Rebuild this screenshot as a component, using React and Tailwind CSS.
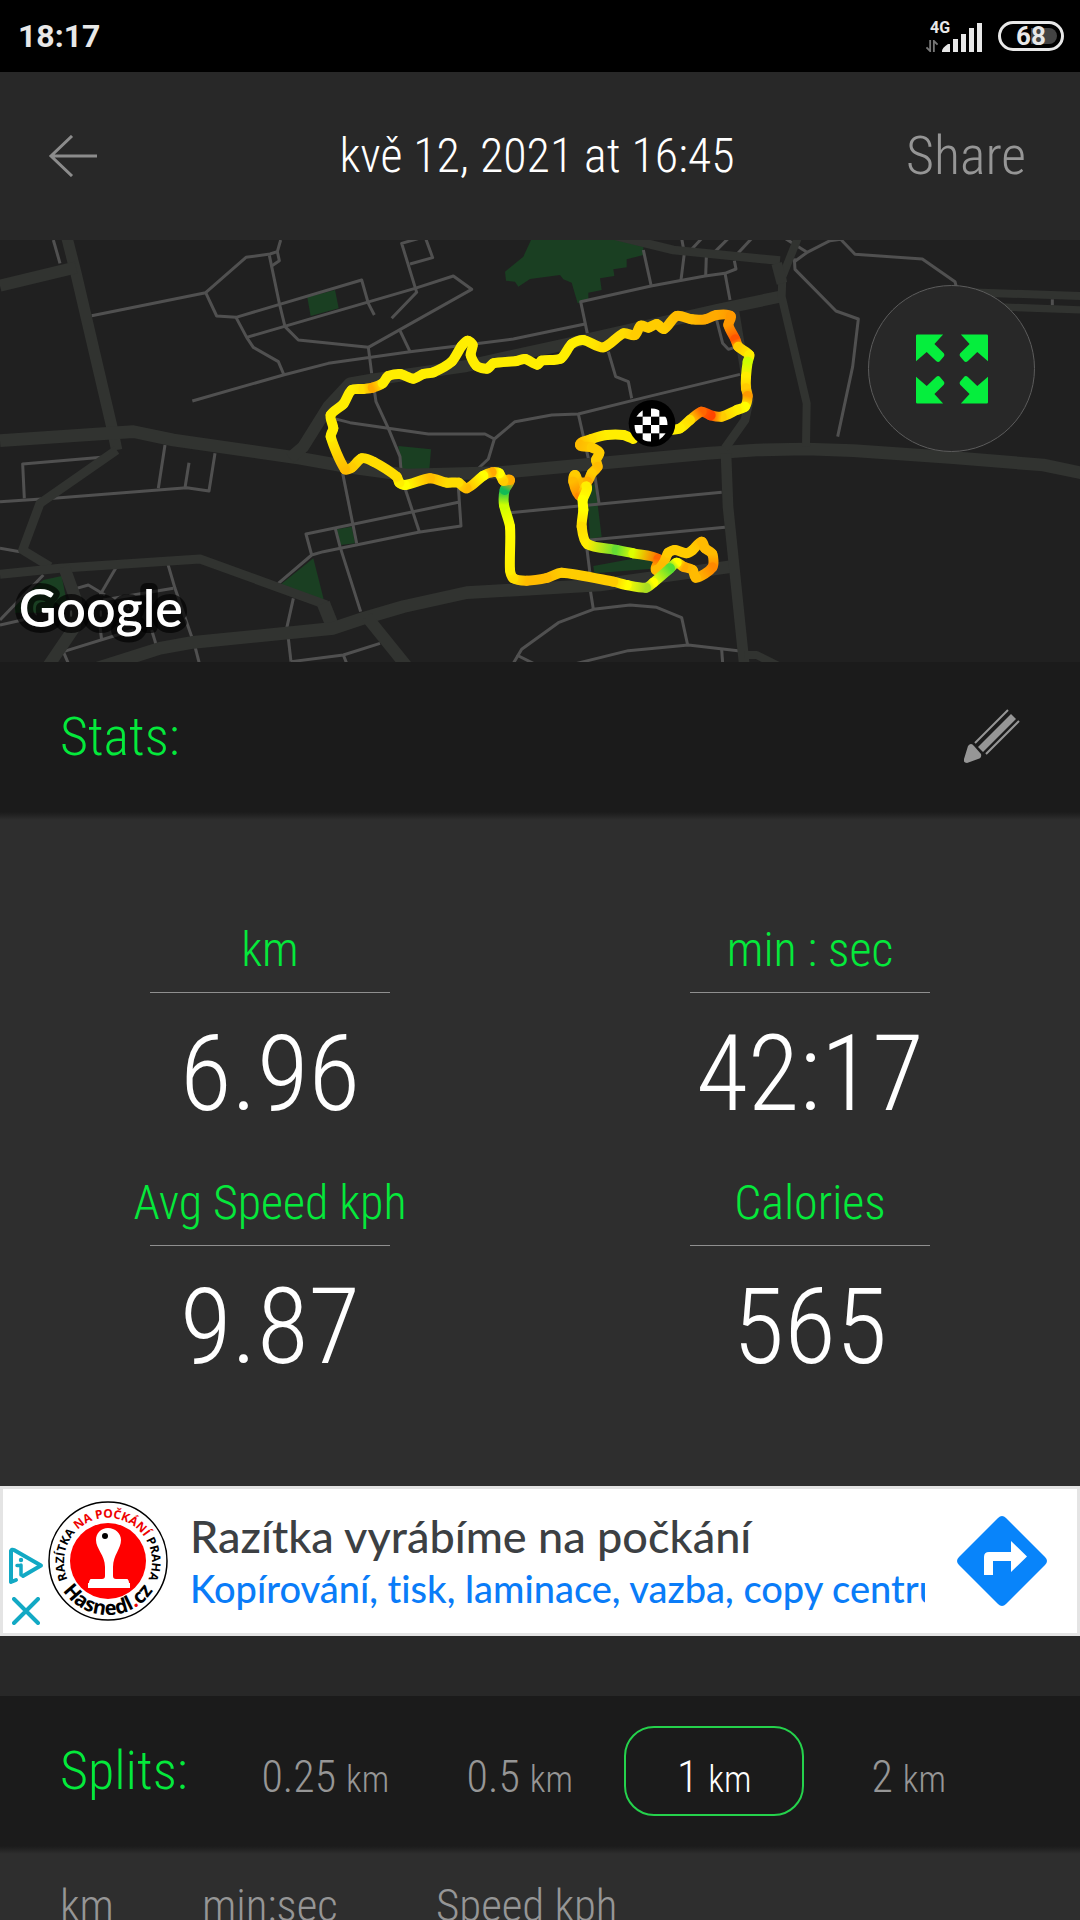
import React from "react";

const DISPLAY = "font-['Roboto_Condensed',Roboto,sans-serif] font-light";

const MAJOR_ROADS = [
  [34, "M200,-10 L228,100 L340,580 L350,630"],
  [27, "M350,630 L120,790 L68,930 L150,980"],
  [36, "M0,137 L228,82"],
  [38, "M0,602 L400,575 L520,600 L900,655 L1060,683 L1220,705 L1500,698 L2120,640 L2270,630 L2418,627 L2560,632 L2860,653 L3130,675 L3250,700"],
  [36, "M870,655 L910,620 L985,500 L1050,430 L1110,420 L1400,378 L1700,312 L2150,210 L2350,168"],
  [27, "M0,1003 L180,985 L600,957 L980,1095"],
  [40, "M970,1090 L1000,1165"],
  [38, "M290,1285 L480,1225 L580,1207 L1000,1165 L1090,1135 L1210,1100 L1400,1058 L1800,1035 L2190,980"],
  [36, "M192,980 L228,1080 L225,1160 L140,1285"],
  [36, "M1100,1130 L1225,1285"],
  [26, "M1840,-14 L2020,30 L2340,62"],
  [24, "M2395,-10 L2347,110 L2345,170 L2420,490 L2418,620"],
  [32, "M2330,70 L2346,130"],
  [32, "M2178,640 L2184,800 L2234,1285"],
  [24, "M2234,1245 L2270,1245 L2350,1285"],
  [26, "M2205,215 L2248,480 L2235,540 L2175,625"],
  [24, "M2880,156 L3250,168"],
  [22, "M2980,200 L3250,210"],
];

const MINOR_ROADS = [
  "M160,0 L180,70",
  "M275,227 L617,158 L738,52 L810,42 L832,35 L842,0",
  "M832,35 L838,62 L815,78",
  "M617,158 L650,228 L708,232 L1085,120 L1105,190 L1123,225",
  "M708,232 L740,292 L760,322 L835,365 L852,405",
  "M808,46 L838,190 L855,260 L895,300 L1105,322",
  "M740,292 L1245,145 L1360,108 L1415,148 L1105,322 L1115,400",
  "M577,483 L850,405 L985,370 L1230,335 L1440,310 L1540,297 L1755,252",
  "M1200,272 L1230,335",
  "M1175,235 L1250,157 L1205,10 L1275,-10 L1298,53 L1230,72",
  "M1762,280 L1742,185 L1953,138 L2115,108 L2175,100 L2208,87 L2203,62",
  "M1930,30 L1953,135",
  "M2045,-5 L2053,40 L2043,120",
  "M2119,50 L2117,108",
  "M2075,28 L2110,-10",
  "M2140,40 L2190,-10",
  "M2208,46 L2260,-10",
  "M2175,100 L2190,180",
  "M2150,240 L2168,310 L2185,328 L2212,320",
  "M2355,-5 L2420,36",
  "M2383,65 L2420,38 L2490,2 L2522,-2 L2565,43 L2767,57 L2865,125 L2870,145",
  "M2383,55 L2385,88 L2508,213 L2575,237 L2558,380 L2513,590",
  "M3157,178 L3157,196",
  "M1825,335 L1847,410 L1885,425 L1895,475",
  "M1430,690 L1465,657 L1483,597 L1545,545 L1655,525 L1735,522 L1935,472 L2220,403",
  "M1483,597 L1455,582 L1285,582 L1050,548 L1000,535",
  "M1120,430 L1128,485 L1165,565 L1200,650 L1203,690",
  "M1735,522 L1765,655",
  "M1028,700 L1070,910",
  "M1005,862 L1020,920 L1082,1115",
  "M935,945 L918,882 L1375,787",
  "M835,1030 L935,945 L970,935 L1255,877 L1383,858 L1375,740",
  "M1215,745 L1258,875",
  "M1530,818 L1800,792 L2165,757",
  "M1785,710 L1797,790",
  "M1770,900 L2175,862",
  "M1760,920 L1770,1000",
  "M1770,1045 L1780,1108",
  "M1540,1270 L1565,1228 L1675,1148 L1780,1108 L1890,1095 L1970,1102 L2045,1133 L2063,1215",
  "M1730,1270 L1885,1232 L2065,1215 L2220,1233",
  "M2165,1228 L2168,1270",
  "M1550,1245 L1610,1275",
  "M873,1265 L1030,1245 L1140,1210",
  "M1030,1245 L1040,1270",
  "M73,775 L68,672 L305,652",
  "M0,785 L180,773 L560,743 L627,753 L645,640",
  "M495,615 L475,745",
  "M567,668 L555,743",
  "M0,925 L60,935",
  "M347,985 L300,1065",
  "M230,1045 L265,1035 L315,1065",
  "M310,1080 L520,1045",
  "M503,970 L525,1045 L575,1190",
  "M0,1140 L130,1005",
  "M0,1155 L90,1135",
  "M300,1160 L305,1200",
  "M205,1270 L190,1235 L400,1170",
  "M455,1170 L470,1220",
  "M585,1220 L598,1270",
  "M880,1075 L860,1165",
  "M865,1195 L873,1265",
];

const PARKS = [
  "922,172 1005,150 1016,205 932,228",
  "840,1035 940,955 972,1082",
  "1010,868 1055,860 1065,910 1022,915",
  "45,1090 130,1020 185,1008 200,1085 120,1118 45,1118",
  "1593,0 1570,50 1515,95 1518,122 1545,125 1555,140 1590,117 1680,105 1690,118 1715,128 1733,190 1765,180 1765,158 1805,150 1800,115 1843,108 1840,88 1880,82 1880,58 1930,45 1930,20 1850,0",
  "1195,618 1293,628 1287,700 1205,690",
  "1760,745 1785,730 1805,890 1770,897",
  "1780,978 1960,945 1975,985 1783,1000",
];

const ROUTE = [
  [1900, 597, "#fe0"], [1870, 585, "#fe0"], [1820, 585, "#fe0"], [1775, 597, "#fd0"], [1740, 614, "#fb0"],
  [1775, 622, "#fc0"], [1798, 638, "#fc0"], [1788, 660, "#fc0"], [1793, 680, "#fb0"], [1775, 700, "#fc0"], [1762, 725, "#fa0"],
  [1735, 725, "#fb0"], [1725, 705, "#fc0"], [1720, 725, "#fb0"], [1740, 768, "#f80"],
  [1760, 740, "#fe0"], [1748, 780, "#ff0"], [1750, 810, "#ff0"], [1745, 860, "#fd0"],
  [1762, 912, "#fe0"], [1850, 930, "#6d3"], [1900, 940, "#df0"], [1975, 957, "#f60"],
  [1968, 990, "#fb0"], [1990, 970, "#fb0"], [2005, 938, "#fc0"], [2025, 930, "#fc0"], [2060, 940, "#fc0"],
  [2078, 930, "#fc0"], [2105, 905, "#fb0"], [2115, 925, "#fb0"], [2137, 942, "#fb0"], [2137, 982, "#f80"],
  [2088, 1013, "#fb0"], [2078, 990, "#fb0"], [2050, 980, "#fa0"], [2030, 968, "#ff0"], [2010, 985, "#5d3"], [1960, 1028, "#ff0"],
  [1938, 1043, "#ad2"], [1880, 1035, "#ff0"], [1840, 1025, "#fc0"], [1685, 998, "#fc0"], [1640, 1014, "#fb0"],
  [1580, 1022, "#fb0"], [1540, 1015, "#fd0"], [1530, 990, "#fe0"], [1530, 860, "#ff0"], [1512, 795, "#cf0"],
  [1514, 750, "#1b5"], [1530, 720, "#fa0"], [1510, 722, "#fc0"], [1498, 700, "#ff0"], [1475, 697, "#fa0"], [1450, 707, "#ff0"],
  [1400, 745, "#fb0"], [1375, 728, "#fd0"], [1340, 728, "#fd0"], [1290, 715, "#fb0"], [1215, 735, "#ff0"], [1198, 728, "#fe0"],
  [1190, 710, "#fd0"], [1120, 665, "#fd0"], [1085, 655, "#fd0"], [1055, 683, "#fc0"], [1035, 688, "#fb0"], [992, 590, "#fe0"],
  [1000, 565, "#fe0"], [992, 525, "#fe0"], [1030, 492, "#fe0"], [1055, 450, "#fe0"], [1090, 447, "#fd0"],
  [1118, 443, "#fa0"], [1148, 430, "#fe0"], [1165, 408, "#fe0"], [1200, 402, "#fe0"], [1240, 416, "#fe0"],
  [1270, 402, "#fe0"], [1300, 397, "#fe0"], [1355, 365, "#fe0"], [1385, 318, "#fe0"], [1403, 302, "#fe0"],
  [1418, 315, "#fe0"], [1412, 345, "#fe0"], [1430, 378, "#fe0"], [1462, 386, "#fe0"], [1480, 370, "#fe0"],
  [1550, 363, "#fe0"], [1575, 357, "#fe0"], [1612, 374, "#fe0"], [1625, 362, "#fe0"], [1682, 356, "#fe0"],
  [1715, 312, "#fe0"], [1750, 300, "#fe0"], [1810, 322, "#fd0"], [1870, 280, "#fd0"], [1905, 285, "#fc0"],
  [1922, 257, "#fc0"], [1945, 263, "#fc0"], [1970, 252, "#fc0"], [1992, 267, "#fc0"], [2030, 228, "#fb0"],
  [2075, 238, "#fb0"], [2115, 238, "#fa0"], [2150, 225, "#fa0"], [2192, 228, "#f90"], [2185, 255, "#f90"],
  [2206, 298, "#f50"], [2215, 320, "#fc0"], [2248, 345, "#fe0"], [2243, 365, "#cf0"], [2238, 410, "#fe0"],
  [2238, 445, "#fc0"], [2243, 468, "#f90"], [2235, 500, "#ff0"], [2210, 510, "#fe0"], [2165, 530, "#fc0"],
  [2132, 526, "#f40"], [2105, 515, "#f60"], [2070, 540, "#fd0"], [2040, 565, "#fe0"], [1990, 572, "#fe0"],
];

// One smooth leg between point i and i + 1, its bend taken from the neighbouring points.
function legPath(i) {
  const a = ROUTE[i];
  const b = ROUTE[i + 1];
  const before = ROUTE[i - 1] || a;
  const after = ROUTE[i + 2] || b;
  const length = Math.hypot(b[0] - a[0], b[1] - a[1]);
  const reach = (p, q) => (0.25 * length) / (Math.hypot(q[0] - p[0], q[1] - p[1]) || 1);
  const ka = reach(before, b);
  const kb = reach(a, after);
  const c1 = [a[0] + (b[0] - before[0]) * ka, a[1] + (b[1] - before[1]) * ka];
  const c2 = [b[0] - (after[0] - a[0]) * kb, b[1] - (after[1] - a[1]) * kb];
  return `M${a[0]},${a[1]} C${c1[0]},${c1[1]} ${c2[0]},${c2[1]} ${b[0]},${b[1]}`;
}

const CHECKS = [
  [0, 0], [2, 0], [1, 1], [3, 1], [0, 2], [2, 2], [1, 3], [3, 3],
];

function RouteMap() {
  return (
    <svg viewBox="0 0 3240 1266" className="block h-auto w-full" role="img" aria-label="Route map">
      <rect width="3240" height="1266" fill="#202020" />
      <g fill="#1a3f22">
        {PARKS.map((p) => <polygon key={p} points={p} />)}
      </g>
      <g fill="none" stroke="#505050" strokeWidth="9" strokeLinejoin="round">
        {MINOR_ROADS.map((d) => <path key={d} d={d} />)}
      </g>
      <g fill="none" stroke="#313330" strokeLinejoin="round">
        {MAJOR_ROADS.map(([w, d]) => <path key={d} d={d} strokeWidth={w} />)}
      </g>
      <defs>
        {ROUTE.slice(1).map(([x, y, c], i) => (
          <linearGradient key={i} id={`leg-${i}`} gradientUnits="userSpaceOnUse" x1={ROUTE[i][0]} y1={ROUTE[i][1]} x2={x} y2={y}>
            <stop offset="0" stopColor={ROUTE[i][2]} />
            <stop offset="1" stopColor={c} />
          </linearGradient>
        ))}
        <clipPath id="flag-clip"><circle cx="1953" cy="555" r="50" /></clipPath>
      </defs>
      <g fill="none" strokeWidth="30" strokeLinecap="round">
        {ROUTE.slice(1).map((_, i) => (
          <path key={i} d={legPath(i)} stroke={`url(#leg-${i})`} />
        ))}
      </g>
      <circle cx="1956" cy="550" r="70" fill="#000" />
      <g clipPath="url(#flag-clip)" fill="#fff">
        {CHECKS.map(([cx, cy]) => (
          <rect key={`${cx}-${cy}`} x={1903 + cx * 25} y={505 + cy * 25} width="25" height="25" />
        ))}
      </g>
      <text x="56" y="1160" fontFamily="Lato, sans-serif" fontSize="156" fontWeight="600" fill="#fff" stroke="#000" strokeOpacity="0.65" strokeWidth="36" strokeLinejoin="round" paintOrder="stroke">Google</text>
    </svg>
  );
}

function StatusBar() {
  return (
    <div className="flex h-[72px] shrink-0 items-center justify-between bg-black pr-4 pl-[18px] font-[Roboto,sans-serif] text-[#e8e8e8]">
      <span className="text-[32px] leading-none font-bold">18:17</span>
      <div className="flex items-center gap-4">
        <div className="flex h-8 items-end">
          <div className="flex h-8 w-5 flex-col items-start justify-between">
            <span className="text-base leading-4 font-bold">4G</span>
            <svg viewBox="0 0 12 13" className="-ml-1 h-3 w-3" fill="none" stroke="#777" strokeWidth="2">
              <path d="M4 0V12L0 8M8 13V1L12 5" />
            </svg>
          </div>
          <svg viewBox="0 0 40 30" className="-ml-2 h-[30px] w-10" fill="#e8e8e8">
            <path d="M0 29Q0 26 6 22H8V30H0ZM11 17h5v13h-5ZM19 12h5v18h-5ZM27 6h5v24h-5ZM35 1h5v29h-5Z" />
          </svg>
        </div>
        <div className="h-[30px] w-[66px] rounded-full border-[3px] border-[#e8e8e8] p-1">
          <div className="flex h-full items-center justify-center rounded-full bg-linear-to-r from-black from-50% via-[#444] via-50% to-[#444]">
            <span className="text-[26px] leading-none font-bold">68</span>
          </div>
        </div>
      </div>
    </div>
  );
}

function Header() {
  return (
    <header className={`grid h-[168px] shrink-0 grid-cols-[1fr_auto_1fr] items-center bg-[#282828] pr-[54px] pl-12 ${DISPLAY}`}>
      <button type="button" aria-label="Back" className="justify-self-start">
        <svg viewBox="0 0 50 42" className="h-[42px] w-[50px]" fill="none" stroke="#8c8c8c" strokeWidth="3">
          <path d="M24 1L3 21L24 41M3 21H49" />
        </svg>
      </button>
      <h1 className="text-[48px] leading-none text-white">kvě 12, 2021 at 16:45</h1>
      <button type="button" className="justify-self-end text-[54px] leading-none text-[#969696]">Share</button>
    </header>
  );
}

function Stat({ label, value }) {
  return (
    <div className="flex flex-col items-center">
      <dt className="flex h-[70px] w-60 items-center justify-center border-b border-[#8f8f8f] pb-4 text-[48px] leading-none whitespace-nowrap text-[#05e93b]">{label}</dt>
      <dd className="mt-7 h-[155px] text-[106px] leading-none text-white">{value}</dd>
    </div>
  );
}

function AdLogo() {
  return (
    <svg viewBox="0 0 120 120" className="size-[120px] shrink-0" role="img" aria-label="Razítka na počkání Praha Hasnedl.cz">
      <defs>
        <path id="arc-top" d="M18.7 76A44 44 0 1 1 101.3 76" />
        <path id="arc-bottom" d="M6 60A54 54 0 0 0 114 60" />
      </defs>
      <circle cx="60" cy="60" r="59" fill="#fff" stroke="#000" strokeWidth="1.5" />
      <circle cx="60" cy="60" r="38" fill="#f00" />
      <path d="M60 27c-7 0-12 5-12 12 0 9 9 15 9 27v9c0 2-1 3-3 3H43c-1 0-2 2-2 4h-1v5h42v-5h-1c0-2-1-4-2-4H68c-2 0-3-1-3-3v-9c0-12 8-18 8-27 0-7-6-12-13-12Z" fill="#fff" />
      <circle cx="57" cy="35" r="3" fill="#000" />
      <text fontFamily="'Open Sans', sans-serif" fontWeight="700" fontSize="12" fill="#000">
        <textPath href="#arc-top" startOffset="50%" textAnchor="middle">RAZÍTKA <tspan fill="#e00">NA POČKÁNÍ</tspan> PRAHA</textPath>
      </text>
      <text fontFamily="'Open Sans', sans-serif" fontWeight="700" fontSize="20" fill="#000">
        <textPath href="#arc-bottom" startOffset="50%" textAnchor="middle">Hasnedl<tspan fill="#e00">.</tspan>cz</textPath>
      </text>
    </svg>
  );
}

function Ad() {
  return (
    <aside className="flex h-[150px] shrink-0 items-center border-[3px] border-[#e4e4e4] bg-white pr-[30px]">
      <div className="flex w-[45px] shrink-0 flex-col items-center gap-3 self-end pb-2">
        <button type="button" aria-label="Ad info">
          <svg viewBox="0 0 36 38" className="block h-[38px] w-9" fill="none" stroke="#12a9c4" strokeWidth="4" strokeLinejoin="round" strokeLinecap="round">
            <path d="M8 33L3 35V4Q4 2 6 3L33 18.500L15 29" />
            <path d="M13 18V28M9 18.500H13" strokeWidth="3.500" />
            <circle cx="13" cy="13" r="2.200" fill="#12a9c4" stroke="none" />
          </svg>
        </button>
        <button type="button" aria-label="Close ad">
          <svg viewBox="0 0 28 28" className="block size-7" stroke="#12a9c4" strokeWidth="4" strokeLinecap="round">
            <path d="M2 2L26 26M26 2L2 26" />
          </svg>
        </button>
      </div>
      <AdLogo />
      <a href="#ad" className="ml-[22px] min-w-0 flex-1 overflow-hidden font-[Lato,sans-serif] font-medium whitespace-nowrap [font-variant-ligatures:none]">
        <span className="block text-[45px] leading-[54px] text-[#3c4043]">Razítka vyrábíme na počkání</span>
        <span className="block overflow-hidden text-[38px] leading-[50px] text-[#0a7cf8]">Kopírování, tisk, laminace, vazba, copy centrum</span>
      </a>
      <a href="#directions" aria-label="Directions" className="ml-8 shrink-0">
        <svg viewBox="0 0 90 90" className="block size-[90px]">
          <path d="M41 2Q45 -2 49 2L88 41Q92 45 88 49L49 88Q45 92 41 88L2 49Q-2 45 2 41Z" fill="#0884fa" />
          <path d="M27 59V41Q27 36 32 36H54V25L70 40.500L54 56V45H36V59Z" fill="#fff" />
        </svg>
      </a>
    </aside>
  );
}

const SPLITS = ["0.25", "0.5", "1", "2"];

export default function App() {
  const [split, setSplit] = React.useState("1");
  return (
    <div className="flex h-screen flex-col overflow-hidden bg-[#282828]">
      <StatusBar />
      <Header />
      <div className="relative shrink-0">
        <RouteMap />
        <button type="button" aria-label="Expand map" className="absolute top-[45px] right-[45px] flex size-[167px] items-center justify-center rounded-full border border-[#5c5c5c] bg-[#282828]">
          <svg viewBox="0 0 215 206" className="h-[70px] w-[72px]" fill="#05ee3d">
            <path id="corner-arrow" d="M0 4Q0 0 4 0H81L55 28L83 56Q87 62 83 66L71 80Q66 84 60 79L32 52L0 80Z" />
            <use href="#corner-arrow" transform="translate(215 0) scale(-1 1)" />
            <use href="#corner-arrow" transform="translate(0 206) scale(1 -1)" />
            <use href="#corner-arrow" transform="translate(215 206) scale(-1 -1)" />
          </svg>
        </button>
      </div>

      <div className={`flex h-[150px] shrink-0 items-center justify-between bg-[#1b1b1b] px-[60px] ${DISPLAY}`}>
        <h2 className="text-[54px] leading-none text-[#05e93b]">Stats:</h2>
        <button type="button" aria-label="Edit">
          <svg viewBox="0 0 56 56" className="block size-14" fill="#969696">
            <path d="M47 5L52 10L19 43L14 38Z" />
            <path d="M44 1L11 34M55 12L22 45" stroke="#969696" strokeWidth="2" />
            <path d="M4 37Q7 33 10 37L17 45Q18 49 14 50L3 54Q-1 54 0 50Z" />
          </svg>
        </button>
      </div>

      <section className={`shrink-0 bg-linear-to-b from-[#1b1b1b] to-[#2e2e2e] to-[8px] ${DISPLAY}`}>
        <dl className="grid h-[674px] grid-cols-2 content-start pt-[111px]">
          <Stat label="km" value="6.96" />
          <Stat label="min : sec" value="42:17" />
          <Stat label="Avg Speed kph" value="9.87" />
          <Stat label="Calories" value="565" />
        </dl>
      </section>

      <Ad />

      <section className={`mt-[60px] shrink-0 ${DISPLAY}`}>
        <div className="flex h-[150px] items-center bg-[#1b1b1b] pr-[74px] pl-[60px]">
          <h2 className="w-[168px] shrink-0 text-[54px] leading-none text-[#05e93b]">Splits:</h2>
          <div className="grid flex-1 grid-cols-4 justify-items-center">
            {SPLITS.map((s) => (
              <button
                key={s}
                type="button"
                aria-pressed={split === s}
                onClick={() => setSplit(s)}
                className={`flex h-[90px] w-[180px] items-center justify-center rounded-[30px] border-2 pt-3 text-[44px] leading-none ${split === s ? "border-[#25d24c] text-white" : "border-transparent text-[#969696]"}`}
              >
                <span>{s} <span className="text-[36px]">km</span></span>
              </button>
            ))}
          </div>
        </div>
        <div className="bg-linear-to-b from-[#1b1b1b] to-[#2e2e2e] to-[8px] pt-8 pl-[60px]">
          <table className="w-full table-fixed text-left text-[45px] leading-[56px] text-[#969696]">
            <thead>
              <tr>
                <th className="w-[142px] font-light">km</th>
                <th className="w-[234px] font-light">min:sec</th>
                <th className="font-light">Speed kph</th>
              </tr>
            </thead>
          </table>
        </div>
      </section>
    </div>
  );
}
